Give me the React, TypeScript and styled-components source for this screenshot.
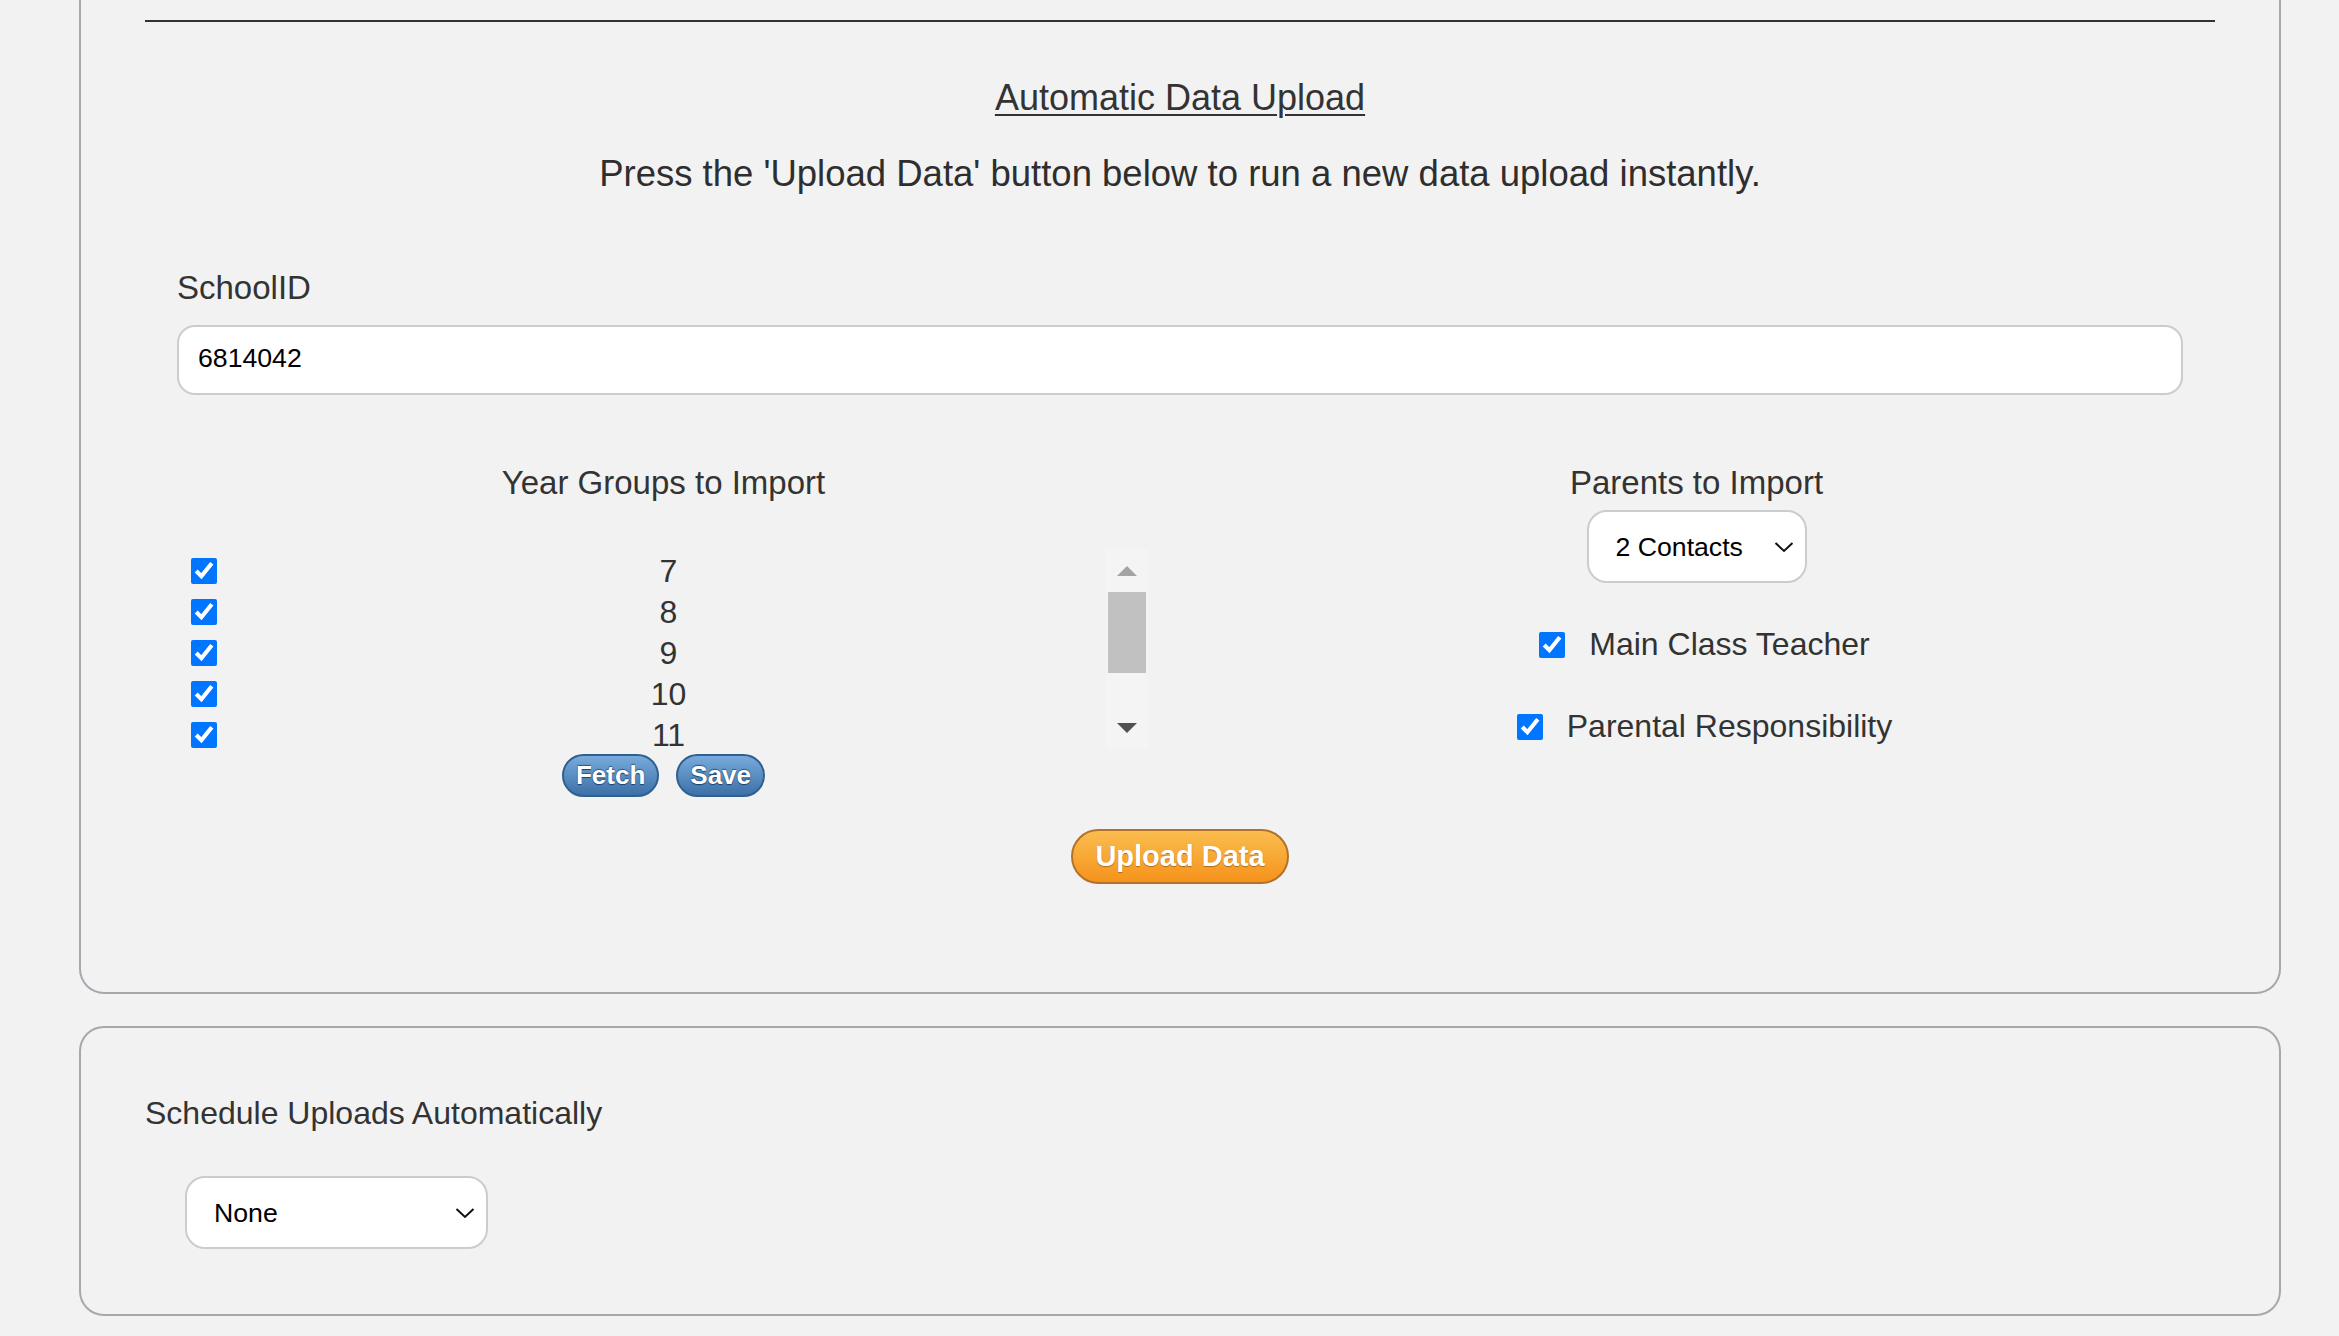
import React from "react";
import styled, { createGlobalStyle } from "styled-components";

const GlobalStyle = createGlobalStyle`
  html, body {
    margin: 0;
    padding: 0;
    background: #f2f2f2;
  }
  body {
    font-family: "Liberation Sans", Arial, Helvetica, sans-serif;
    color: #333;
  }
  * { box-sizing: border-box; }
`;

const Page = styled.div`
  width: 2202px;
  margin-left: 79px;
  padding-bottom: 21px;
`;

const Card = styled.section<{ $cutTop?: boolean }>`
  background: #f2f2f2;
  border: 2px solid #a4a9ae;
  border-top: ${(p) => (p.$cutTop ? "none" : "2px solid #a4a9ae")};
  border-radius: ${(p) => (p.$cutTop ? "0 0 25px 25px" : "25px")};
  padding: ${(p) => (p.$cutTop ? "20px 64px 108px" : "66px 64px 65px")};
  & + & {
    margin-top: 32px;
  }
`;

const Rule = styled.hr`
  margin: 0;
  border: none;
  border-top: 2px solid #333;
  height: 0;
`;

const Title = styled.h2`
  margin: 54px 0 0;
  font-size: 36px;
  line-height: 43px;
  font-weight: 400;
  text-align: center;
  text-decoration: underline;
  text-decoration-thickness: 2px;
  text-underline-offset: 4px;
  color: #333;
`;

const Lead = styled.p`
  margin: 33px 0 0;
  font-size: 36.5px;
  line-height: 43px;
  text-align: center;
  color: #2e2e2e;
`;

const Form = styled.div`
  padding: 0 32px;
`;

const FieldLabel = styled.label`
  display: block;
  margin-top: 74px;
  font-size: 33px;
  line-height: 38px;
  color: #333;
`;

const TextInput = styled.input`
  display: block;
  width: 100%;
  height: 70px;
  margin-top: 18px;
  padding: 0 19px 4px;
  border: 2px solid #cccccc;
  border-radius: 18px;
  background: #fff;
  font-family: "Liberation Sans", Arial, sans-serif;
  font-size: 26.67px;
  color: #000;
  outline: none;
`;

const Columns = styled.div`
  display: grid;
  grid-template-columns: 1fr 1fr;
  column-gap: 60px;
  margin-top: 69px;
`;

const Column = styled.div`
  display: flex;
  flex-direction: column;
  align-items: center;
`;

const ColumnHeading = styled.div`
  font-size: 33px;
  line-height: 38px;
  color: #333;
`;

const ListFrame = styled.div`
  display: grid;
  grid-template-columns: 1fr 42px;
  width: 100%;
  height: 200px;
  margin-top: 47px;
  padding-right: 2px;
`;

const ListViewport = styled.div`
  overflow: hidden;
`;

const YearRow = styled.label`
  display: grid;
  grid-template-columns: 54px 1fr;
  align-items: center;
  height: 41px;
`;

const Check = styled.input.attrs({ type: "checkbox" })<{ $inset?: number }>`
  width: 26px;
  height: 26px;
  margin: 0 0 0 ${(p) => p.$inset ?? 0}px;
  accent-color: #0075ff;
`;

const YearNumber = styled.span`
  text-align: center;
  font-size: 32px;
  line-height: 41px;
  padding-top: 2px;
  color: #333;
`;

const Scrollbar = styled.div`
  display: flex;
  flex-direction: column;
  align-items: center;
  background: #f4f4f4;
`;

const ScrollButton = styled.div<{ $h: number }>`
  display: flex;
  align-items: center;
  justify-content: center;
  height: ${(p) => p.$h}px;
  width: 100%;
`;

const Arrow = styled.span<{ $dir: "up" | "down"; $color: string }>`
  width: 0;
  height: 0;
  border-left: 10px solid transparent;
  border-right: 10px solid transparent;
  ${(p) =>
    p.$dir === "up"
      ? `border-bottom: 10px solid ${p.$color};`
      : `border-top: 10px solid ${p.$color};`}
`;

const Thumb = styled.div`
  width: 38px;
  height: 81px;
  background: #c1c1c1;
`;

const ScrollSpacer = styled.div`
  flex: 1;
`;

const ButtonRow = styled.div`
  display: flex;
  gap: 17px;
  margin-top: 5px;
`;

const BlueButton = styled.button`
  height: 43px;
  padding: 0 12px;
  border: 2px solid #2f6190;
  border-radius: 22px;
  background: linear-gradient(#78abdb, #3d70a7);
  color: #fff;
  font-family: "Liberation Sans", Arial, sans-serif;
  font-size: 26px;
  font-weight: 700;
  line-height: 39px;
  text-shadow: 0 1px 1px #17406b, 0 -1px 1px #2a5888;
  cursor: pointer;
`;

const SelectWrap = styled.div<{ $width: number; $mt?: number; $ml?: number }>`
  position: relative;
  width: ${(p) => p.$width}px;
  margin-top: ${(p) => p.$mt ?? 0}px;
  margin-left: ${(p) => p.$ml ?? 0}px;
`;

const Select = styled.select<{ $h: number }>`
  appearance: none;
  -webkit-appearance: none;
  display: block;
  width: 100%;
  height: ${(p) => p.$h}px;
  padding: 0 50px 0 27px;
  border: 2px solid #cccccc;
  border-radius: 20px;
  background: #fff;
  font-family: "Liberation Sans", Arial, sans-serif;
  font-size: 26.67px;
  color: #000;
  outline: none;
`;

const Chevron = styled.svg`
  position: absolute;
  right: 13px;
  top: 50%;
  width: 20px;
  height: 11px;
  transform: translateY(-50%);
  pointer-events: none;
`;

const OptionRow = styled.label<{ $mt: number }>`
  display: flex;
  align-items: center;
  gap: 24px;
  height: 41px;
  margin-top: ${(p) => p.$mt}px;
  padding-left: 16px;
  font-size: 32px;
  color: #333;
`;

const ActionRow = styled.div`
  display: flex;
  justify-content: center;
  margin-top: 32px;
`;

const OrangeButton = styled.button`
  height: 55px;
  padding: 0 22px;
  border: 2px solid #b1722b;
  border-radius: 28px;
  background: linear-gradient(#fabd4f, #f5931c);
  color: #fff;
  font-family: "Liberation Sans", Arial, sans-serif;
  font-size: 29px;
  font-weight: 700;
  line-height: 51px;
  text-shadow: 0 1px 1px #b26a18;
  cursor: pointer;
`;

const SectionLabel = styled.div`
  font-size: 32px;
  line-height: 38px;
  color: #333;
`;

const ChevronIcon = () => (
  <Chevron viewBox="0 0 20 11" fill="none">
    <polyline points="1.5,1.5 10,9.5 18.5,1.5" stroke="#111" strokeWidth="2" />
  </Chevron>
);

const years = [7, 8, 9, 10, 11, 12, 13];

export default function App() {
  return (
    <>
      <GlobalStyle />
      <Page>
        <Card $cutTop>
          <Rule />
          <Title>Automatic Data Upload</Title>
          <Lead>Press the 'Upload Data' button below to run a new data upload instantly.</Lead>
          <Form>
            <FieldLabel htmlFor="school-id">SchoolID</FieldLabel>
            <TextInput id="school-id" defaultValue="6814042" />
            <Columns>
              <Column>
                <ColumnHeading>Year Groups to Import</ColumnHeading>
                <ListFrame>
                  <ListViewport>
                    {years.map((y) => (
                      <YearRow key={y}>
                        <Check $inset={14} defaultChecked />
                        <YearNumber>{y}</YearNumber>
                      </YearRow>
                    ))}
                  </ListViewport>
                  <Scrollbar>
                    <ScrollButton $h={43}>
                      <Arrow $dir="up" $color="#a3a3a3" />
                    </ScrollButton>
                    <Thumb />
                    <ScrollSpacer />
                    <ScrollButton $h={42}>
                      <Arrow $dir="down" $color="#505050" />
                    </ScrollButton>
                  </Scrollbar>
                </ListFrame>
                <ButtonRow>
                  <BlueButton>Fetch</BlueButton>
                  <BlueButton>Save</BlueButton>
                </ButtonRow>
              </Column>
              <Column>
                <ColumnHeading>Parents to Import</ColumnHeading>
                <SelectWrap $width={220} $mt={8}>
                  <Select $h={73} defaultValue="2">
                    <option value="1">1 Contact</option>
                    <option value="2">2 Contacts</option>
                  </Select>
                  <ChevronIcon />
                </SelectWrap>
                <OptionRow $mt={41}>
                  <Check defaultChecked />
                  <span>Main Class Teacher</span>
                </OptionRow>
                <OptionRow $mt={41}>
                  <Check defaultChecked />
                  <span>Parental Responsibility</span>
                </OptionRow>
              </Column>
            </Columns>
          </Form>
          <ActionRow>
            <OrangeButton>Upload Data</OrangeButton>
          </ActionRow>
        </Card>
        <Card>
          <SectionLabel>Schedule Uploads Automatically</SectionLabel>
          <SelectWrap $width={303} $mt={44} $ml={40}>
            <Select $h={73} defaultValue="none">
              <option value="none">None</option>
              <option value="daily">Daily</option>
              <option value="weekly">Weekly</option>
            </Select>
            <ChevronIcon />
          </SelectWrap>
        </Card>
      </Page>
    </>
  );
}
